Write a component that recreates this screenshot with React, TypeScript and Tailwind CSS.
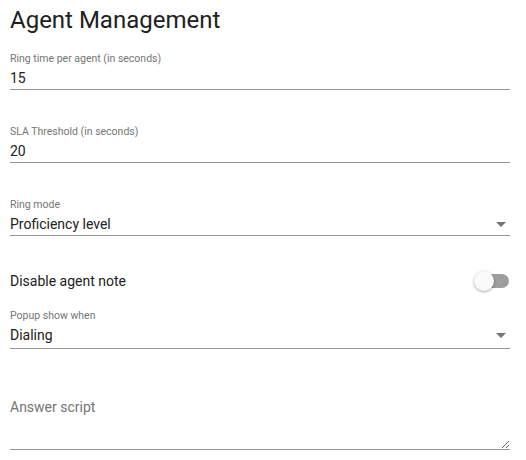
import React from "react";

type Field = {
  label: string;
  value: string;
  select?: boolean;
  padBottom?: string;
};

const CaretDown = () => (
  <svg width="10" height="5" viewBox="0 0 10 5" className="mr-[4px] fill-[#757575]">
    <path d="M0 0h10L5 5z" />
  </svg>
);

const TextField = ({ label, value, select, padBottom = "pb-[1px]" }: Field) => (
  <div className="flex flex-col border-b border-[#949494]">
    <span className="text-[10.5px] leading-[12px] text-[#757575]">{label}</span>
    <div className={`mt-[3px] flex items-center justify-between ${padBottom}`}>
      <span className="text-[14px] leading-[20px] text-[#212121]">{value}</span>
      {select && <CaretDown />}
    </div>
  </div>
);

const Toggle = () => (
  <div className="relative mr-[1px] flex h-[20px] w-[36px] items-center">
    <div className="ml-[3px] h-[14px] w-[33px] rounded-full bg-[#9e9e9e]" />
    <div className="absolute left-[1px] top-0 h-[20px] w-[20px] rounded-full bg-[#fafafa] shadow-[0_1px_3px_rgba(0,0,0,0.35)]" />
  </div>
);

const App = () => {
  return (
    <div className="w-[526px] bg-white pl-[10px] pr-[16px] font-['Roboto',sans-serif]">
      <h1 className="pt-[4px] text-[24px] font-normal leading-[32px] text-[#212121]">
        Agent Management
      </h1>
      <div className="mt-[17px] flex flex-col gap-[36px]">
        <TextField label="Ring time per agent (in seconds)" value="15" />
        <TextField label="SLA Threshold (in seconds)" value="20" />
        <TextField label="Ring mode" value="Proficiency level" select />
      </div>
      <div className="mt-[35px] flex items-center justify-between">
        <span className="text-[14px] leading-[20px] text-[#212121]">Disable agent note</span>
        <Toggle />
      </div>
      <div className="mt-[19px]">
        <TextField label="Popup show when" value="Dialing" select padBottom="pb-[3px]" />
      </div>
      <div className="mt-[48px] border-b border-[#949494]">
        <textarea
          placeholder="Answer script"
          className="block h-[52px] w-full resize-y bg-transparent text-[14px] leading-[20px] text-[#212121] outline-none placeholder:text-[#757575]"
        />
      </div>
    </div>
  );
};

export default App;
